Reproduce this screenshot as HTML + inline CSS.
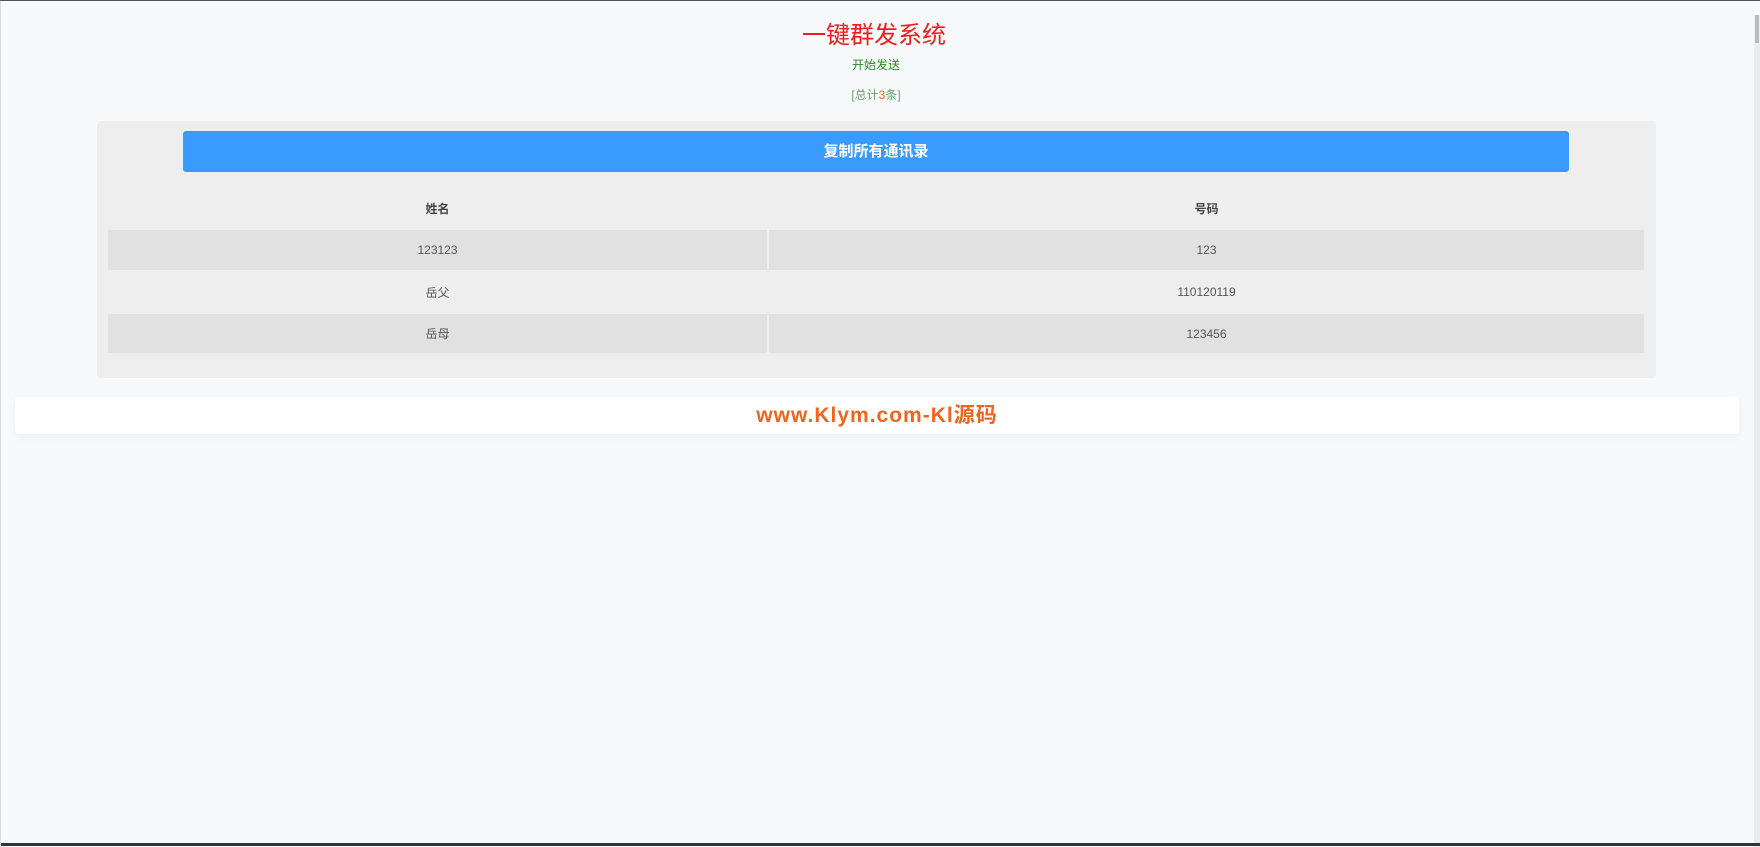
<!DOCTYPE html>
<html><head><meta charset="utf-8"><style>
html,body{margin:0;padding:0}
body{width:1760px;height:846px;background:#f8f9fb;position:relative;overflow:hidden;font-family:"Liberation Sans","Noto Sans CJK SC",sans-serif;border-top:1px solid #555;box-sizing:border-box}
.abs{position:absolute}
.t{left:0;width:1760px;text-align:center}
.box{left:97px;top:120px;width:1559px;height:257px;background:#eeeeee;border-radius:3px}
.btn{left:183px;top:130px;width:1386px;height:41px;background:#3a9bff;border-radius:3px;color:#fff;font-weight:bold;font-size:15px;text-align:center;line-height:41px}
.row{left:108px;width:1536px;height:40px}
.c1,.c2{position:absolute;top:0;height:100%;text-align:center;font-size:12px;color:#555;display:flex;align-items:center;justify-content:center}
.c1{left:0;width:659px}.c2{left:661px;width:875px}
.g .c1,.g .c2{background:#e1e1e1}
.banner{left:15px;top:396px;width:1724px;height:37px;background:#fff;border-radius:3px;box-shadow:0 2px 8px rgba(0,0,0,0.05);text-align:center;line-height:37px;color:#f0641e;font-weight:bold;font-size:21px;letter-spacing:1px}
</style></head><body>
<div class="abs t" style="top:14px;left:-6px;font-size:24px;color:#f01c1c">一键群发系统</div>
<div class="abs t" style="top:55px;left:-4px;font-size:12px;color:#2a8a2a">开始发送</div>
<div class="abs t" style="top:85px;left:-4px;font-size:12px;color:#6aa36a">[总计<span style="color:#f0641e">3</span>条]</div>
<div class="abs box"></div>
<div class="abs btn">复制所有通讯录</div>
<div class="abs row" style="top:187px"><div class="c1" style="font-weight:bold;color:#444">姓名</div><div class="c2" style="font-weight:bold;color:#444">号码</div></div>
<div class="abs row g" style="top:229px"><div class="c1">123123</div><div class="c2">123</div></div>
<div class="abs row" style="top:270px;height:42px"><div class="c1">岳父</div><div class="c2">110120119</div></div>
<div class="abs row g" style="top:313px;height:39px"><div class="c1">岳母</div><div class="c2">123456</div></div>
<div class="abs banner">www.Klym.com-Kl源码</div>
<div class="abs" style="right:0;top:14px;width:6px;height:832px;background:#ececec"></div>
<div class="abs" style="right:1px;top:14px;width:4px;height:28px;background:#bbb"></div>
<div class="abs" style="left:0;bottom:0;width:1760px;height:3px;background:#333"></div>
<div class="abs" style="left:0;top:0;width:1px;height:846px;background:#ddd"></div>
</body></html>
